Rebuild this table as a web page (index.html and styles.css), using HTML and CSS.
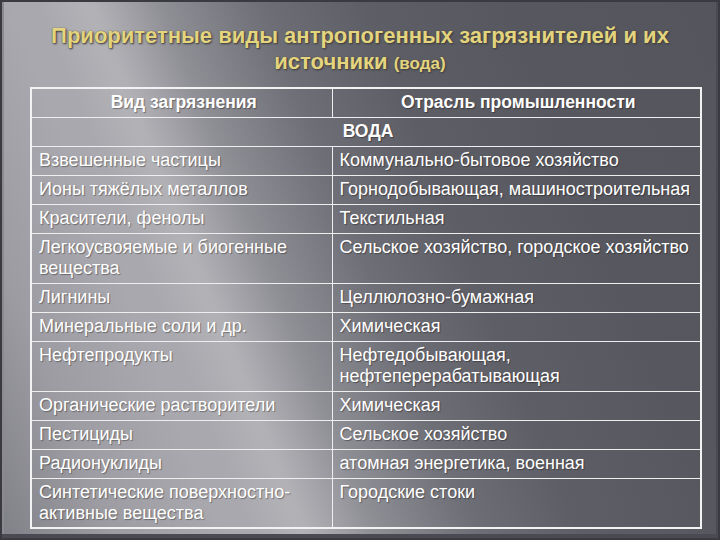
FILE: index.html
```html
<!DOCTYPE html>
<html lang="ru">
<head>
<meta charset="utf-8">
<title>Приоритетные виды антропогенных загрязнителей</title>
<link rel="stylesheet" href="styles.css">
</head>
<body>
<div class="slide">
  <h1 class="title">Приоритетные виды антропогенных загрязнителей и их<br>источники <span class="small">(вода)</span></h1>
  <table class="grid">
    <colgroup><col class="c1"><col class="c2"></colgroup>
    <tr class="r1 head"><th>Вид загрязнения</th><th>Отрасль промышленности</th></tr>
    <tr class="r1 head"><th colspan="2">ВОДА</th></tr>
    <tr class="r1"><td>Взвешенные частицы</td><td>Коммунально-бытовое хозяйство</td></tr>
    <tr class="r1"><td>Ионы тяжёлых металлов</td><td>Горнодобывающая, машиностроительная</td></tr>
    <tr class="r1"><td>Красители, фенолы</td><td>Текстильная</td></tr>
    <tr class="r2"><td>Легкоусвояемые и биогенные<br>вещества</td><td>Сельское хозяйство, городское хозяйство</td></tr>
    <tr class="r1"><td>Лигнины</td><td>Целлюлозно-бумажная</td></tr>
    <tr class="r1"><td>Минеральные соли и др.</td><td>Химическая</td></tr>
    <tr class="r2"><td>Нефтепродукты</td><td>Нефтедобывающая,<br>нефтеперерабатывающая</td></tr>
    <tr class="r1"><td>Органические растворители</td><td>Химическая</td></tr>
    <tr class="r1"><td>Пестициды</td><td>Сельское хозяйство</td></tr>
    <tr class="r1"><td>Радионуклиды</td><td>атомная энергетика, военная</td></tr>
    <tr class="r2"><td>Синтетические поверхностно-<br>активные вещества</td><td>Городские стоки</td></tr>
  </table>
</div>
</body>
</html>
```
FILE: styles.css
```css
html, body {
  margin: 0;
  padding: 0;
  width: 720px;
  height: 540px;
  overflow: hidden;
}
.slide {
  box-sizing: border-box;
  width: 720px;
  height: 540px;
  border: 2px solid #3a3a40;
  padding: 21px 18px 0 28px;
  font-family: "Liberation Sans", Arial, sans-serif;
  background:
    linear-gradient(68deg, rgba(255,255,255,0) 0%, rgba(255,255,255,0) 27%, rgba(255,255,255,0.12) 33%, rgba(255,255,255,0) 40%, rgba(255,255,255,0) 100%),
    linear-gradient(68deg, #808087 0%, #9c9ca2 12%, #a8a8ae 24%, #a9a9ae 32%, #8c8c93 41%, #6e6e76 51%, #5e5e66 62%, #57575f 78%, #55555d 100%);
  box-shadow: inset -8px -10px 0 -6px #4a4a52, inset 6px 0 0 -4px #8a8a90;
}
.title {
  margin: 0 0 10px 0;
  text-align: center;
  font-size: 22px;
  line-height: 26px;
  font-weight: bold;
  color: #e4d47e;
  text-shadow: 1px 1px 2px #3a3a3a, 0 0 1px #555;
  padding-right: 10px;
}
.title .small {
  font-size: 17px;
}
.grid {
  width: 672px;
  border-collapse: collapse;
  border: 2px solid #f2f2f2;
  color: #ffffff;
  font-size: 18px;
  line-height: 21px;
  text-shadow: 1px 1px 1px rgba(0,0,0,0.35);
}
.c1 { width: 301px; }
.grid th, .grid td {
  border: 1px solid #eeeeee;
  padding: 3px 3px 3px 7px;
  vertical-align: top;
  text-align: left;
  white-space: nowrap;
}
.grid th {
  text-align: center;
  font-weight: bold;
  font-size: 17.5px;
}
.r1 { height: 29px; }
.r2 { height: 50px; }
```
